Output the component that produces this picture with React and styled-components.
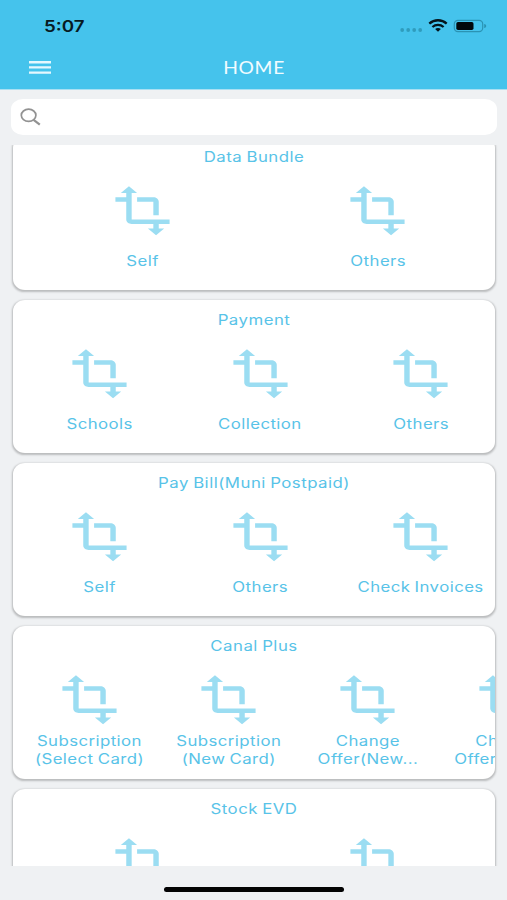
import React from "react";
import styled, { createGlobalStyle } from "styled-components";

const GlobalStyle = createGlobalStyle`
  * { box-sizing: border-box; }
  body { margin: 0; background: #eff1f3; }
`;

const Screen = styled.div`
  display: flex;
  flex-direction: column;
  width: 507px;
  height: 900px;
  overflow: hidden;
  background: #eff1f3;
  font-family: Inter, "Liberation Sans", sans-serif;
`;

const Header = styled.header`
  flex: none;
  height: 90px;
  border-bottom: 1px solid #a9e0f3;
  background: #45c3ec;
`;

const StatusBar = styled.div`
  display: flex;
  align-items: center;
  justify-content: space-between;
  height: 45px;
  padding: 7px 20px 0 43.5px;
`;

const Clock = styled.span`
  font-size: 16px;
  font-weight: 600;
  line-height: 20px;
  color: #071a22;
  transform: scaleX(1.17);
  transform-origin: left center;
`;

const StatusIcons = styled.svg`
  display: block;
  width: 88px;
  height: 16px;
`;

const NavBar = styled.div`
  display: grid;
  grid-template-columns: 80px 1fr 80px;
  align-items: center;
  height: 44px;
`;

const MenuButton = styled.button`
  display: block;
  width: 22px;
  height: 13px;
  margin: 0 0 0 29px;
  padding: 0;
  border: 0;
  background: none;
`;

const MenuIcon = styled.svg`
  display: block;
  width: 22px;
  height: 13px;
`;

const PageTitle = styled.h1`
  margin: 0;
  padding: 1px 0 0 1px;
  text-align: center;
  font: 400 17.5px/24px Lato, sans-serif;
  letter-spacing: 0.6px;
  color: #f1fbff;
  transform: scaleX(1.1);
`;

const SearchBox = styled.label`
  display: flex;
  flex: none;
  align-items: center;
  height: 36px;
  margin: 9px 10px 10px 11px;
  padding-left: 9px;
  border-radius: 12px / 10px;
  background: #fff;
`;

const SearchIcon = styled.svg`
  width: 21px;
  height: 18px;
`;

const CardList = styled.main`
  display: flex;
  flex: none;
  flex-direction: column;
  gap: 10px;
  height: 721px;
  padding: 0 12px 0 13px;
  overflow: hidden;
`;

const Card = styled.section`
  flex: none;
  height: 153px;
  margin-top: ${(p) => (p.$scrolled ? "-8px" : "0")};
  border-radius: 12px / 11px;
  background: #fff;
  box-shadow: 0 1px 2px 0.5px rgba(0, 0, 0, 0.22);
`;

const CardTitle = styled.h2`
  margin: 0;
  padding-top: 10.5px;
  text-align: center;
  font-size: 14px;
  font-weight: 400;
  line-height: 18px;
  letter-spacing: 0.4px;
  word-spacing: -0.8px;
  white-space: nowrap;
  color: #58c3e8;
  transform: scaleX(1.2);
`;

const Actions = styled.div`
  display: flex;
  height: 124.5px;
  padding: 18px 0 0 ${(p) => p.$inset}px;
  overflow: hidden;
`;

const Action = styled.button`
  display: flex;
  flex: none;
  flex-direction: column;
  align-items: center;
  width: ${(p) => p.$width}px;
  padding: 0;
  border: 0;
  background: none;
  font-family: inherit;
`;

const ActionIcon = styled.svg`
  display: block;
  flex: none;
  width: 65px;
  height: 53.4px;
  fill: #9bddf2;
`;

const ActionLabel = styled.span`
  display: flex;
  align-items: center;
  height: 48px;
  font-size: 14px;
  line-height: 17.5px;
  letter-spacing: 0.35px;
  word-spacing: -0.8px;
  text-align: center;
  white-space: pre;
  color: #58c3e8;
  transform: scaleX(1.2);
`;

const Footer = styled.footer`
  display: flex;
  flex: 1;
  justify-content: center;
  padding: 21px 0 0 1px;
`;

const HomeIndicator = styled.div`
  width: 180px;
  height: 5px;
  border-radius: 3px;
  background: #030303;
`;

const groups = [
  { title: "Data Bundle", inset: 12.3, width: 235, items: ["Self", "Others"] },
  { title: "Payment", inset: 6.6, width: 160.5, items: ["Schools", "Collection", "Others"] },
  { title: "Pay Bill(Muni Postpaid)", inset: 6.6, width: 160.5, items: ["Self", "Others", "Check Invoices"] },
  {
    title: "Canal Plus",
    inset: 6.4,
    width: 139.3,
    items: [
      "Subscription\n(Select Card)",
      "Subscription\n(New Card)",
      "Change\nOffer(New...",
      "Change\nOffer(Rene...",
    ],
  },
  { title: "Stock EVD", inset: 12.3, width: 235, items: ["Self", "Others"] },
];

function TransformIcon() {
  return (
    <ActionIcon viewBox="0 0 24 24" preserveAspectRatio="none" aria-hidden="true">
      <path d="M22 18v-2H8V4h2L7 1 4 4h2v2H2v2h4v8c0 1.1.9 2 2 2h8v2h-2l3 3 3-3h-2v-2h4zM10 8h6v6h2V8c0-1.1-.9-2-2-2h-6v2z" />
    </ActionIcon>
  );
}

function StatusGlyphs() {
  return (
    <StatusIcons viewBox="0 0 88 16" aria-hidden="true">
      <g fill="#2f9cbd">
        <circle cx="3.2" cy="12" r="1.9" />
        <circle cx="9.2" cy="12" r="1.9" />
        <circle cx="15.2" cy="12" r="1.9" />
        <circle cx="21.2" cy="12" r="1.9" />
      </g>
      <g fill="none" stroke="#04141b" strokeWidth="2.3">
        <path d="M30.3 5.7C35.3 1.1 42.7 1.1 47.7 5.7" />
        <path d="M33.4 9C36.6 6.2 41.4 6.2 44.6 9" />
      </g>
      <path d="M36.1 11.1C37.7 9.7 40.3 9.7 41.9 11.1L39 13.7Z" fill="#04141b" />
      <rect x="55.3" y="2.3" width="28.4" height="11.4" rx="3.6" fill="none" stroke="#2b93b3" strokeWidth="1.2" />
      <rect x="57.3" y="4" width="17.2" height="8" rx="1.7" fill="#02080b" />
      <path d="M85.2 6v4c1.4-.3 2-1.1 2-2s-.6-1.7-2-2Z" fill="#2b93b3" />
    </StatusIcons>
  );
}

export default function App() {
  return (
    <Screen>
      <GlobalStyle />
      <Header>
        <StatusBar>
          <Clock>5:07</Clock>
          <StatusGlyphs />
        </StatusBar>
        <NavBar>
          <MenuButton aria-label="Menu">
            <MenuIcon viewBox="0 0 22 13" stroke="#e6f8fe" strokeWidth="2.4" aria-hidden="true">
              <path d="M0 1.2H22M0 6.4H22M0 11.6H22" />
            </MenuIcon>
          </MenuButton>
          <PageTitle>HOME</PageTitle>
        </NavBar>
      </Header>
      <SearchBox>
        <SearchIcon viewBox="0 0 21 18" fill="none" stroke="#929292" aria-hidden="true">
          <ellipse cx="8.6" cy="7.3" rx="7.3" ry="6.1" strokeWidth="1.7" />
          <path d="M13.6 11.8L19.8 16.7" strokeWidth="2.2" />
        </SearchIcon>
      </SearchBox>
      <CardList>
        {groups.map((group, i) => (
          <Card key={group.title} $scrolled={i === 0}>
            <CardTitle>{group.title}</CardTitle>
            <Actions $inset={group.inset}>
              {group.items.map((label, j) => (
                <Action key={j} $width={group.width}>
                  <TransformIcon />
                  <ActionLabel>{label}</ActionLabel>
                </Action>
              ))}
            </Actions>
          </Card>
        ))}
      </CardList>
      <Footer>
        <HomeIndicator />
      </Footer>
    </Screen>
  );
}
